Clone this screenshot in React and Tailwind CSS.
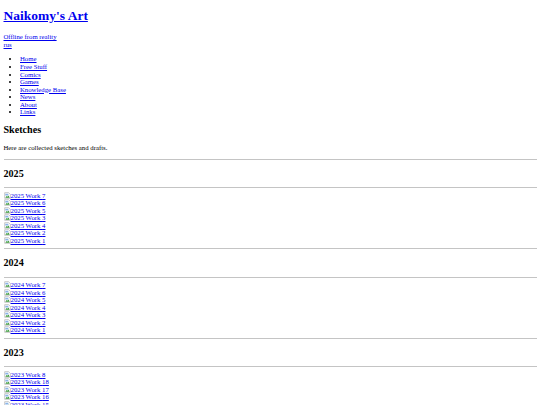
import React from "react";

const navLinks = ["Home", "Free Stuff", "Comics", "Games", "Knowledge Base", "News", "About", "Links"];

const years = [
  { year: "2025", works: [7, 6, 5, 3, 4, 2, 1] },
  { year: "2024", works: [7, 6, 5, 4, 3, 2, 1] },
  { year: "2023", works: [8, 18, 17, 16, 15, 14, 13, 12] },
];

const BrokenImage = () => (
  <svg width="7" height="7" viewBox="0 0 16 16" className="inline-block align-[-1px]">
    <path d="M1.5 1.5h9l4 4v9h-13z" fill="#fff" stroke="#9a9a9a" strokeWidth="1.2" />
    <path d="M3 4h7v4H3z" fill="#8ab4e8" />
    <path d="M3 13l3-4 2 2 2-3 3 5z" fill="#3a9a3a" />
  </svg>
);

const Rule = ({ className }) => <hr className={"border-0 border-t border-[#c4c4c4] " + className} />;

export default function App() {
  return (
    <div className="px-[3.5px] pb-4 bg-white text-black font-['Liberation_Serif','Times_New_Roman',serif] text-[6.75px] leading-[7.5px]">
      {/* header */}
      <h1 className="pt-[8.4px] text-[13.5px] leading-[15px] font-bold">
        <a href="#" className="text-[#0000ee] underline">Naikomy's Art</a>
      </h1>
      <p className="mt-[10px]">
        <a href="#" className="text-[#0000ee] underline">Offline from reality</a>
      </p>
      <a href="#" className="block text-[#0000ee] underline w-fit">rus</a>

      {/* nav */}
      <ul className="mt-[7px] pl-[16.5px] list-disc">
        {navLinks.map((item) => (
          <li key={item} className="leading-[7.57px]">
            <a href="#" className="text-[#0000ee] underline">{item}</a>
          </li>
        ))}
      </ul>

      {/* content */}
      <h2 className="mt-[8.5px] text-[10.1px] leading-[11px] font-bold">Sketches</h2>
      <p className="mt-[8.75px]">Here are collected sketches and drafts.</p>

      {years.map((group, i) => (
        <div key={group.year}>
          <Rule className={i === 0 ? "mt-[7.2px]" : "mt-[4px]"} />
          <h2 className="mt-[8px] text-[10.1px] leading-[11px] font-bold">{group.year}</h2>
          <Rule className="mt-[8.5px]" />
          <div className="mt-[3.5px]">
            {group.works.map((n) => (
              <a key={n} href="#" className="block w-fit h-[7.5px] text-[#0000ee] underline">
                <BrokenImage />
                {group.year} Work {n}
              </a>
            ))}
          </div>
        </div>
      ))}
    </div>
  );
}
